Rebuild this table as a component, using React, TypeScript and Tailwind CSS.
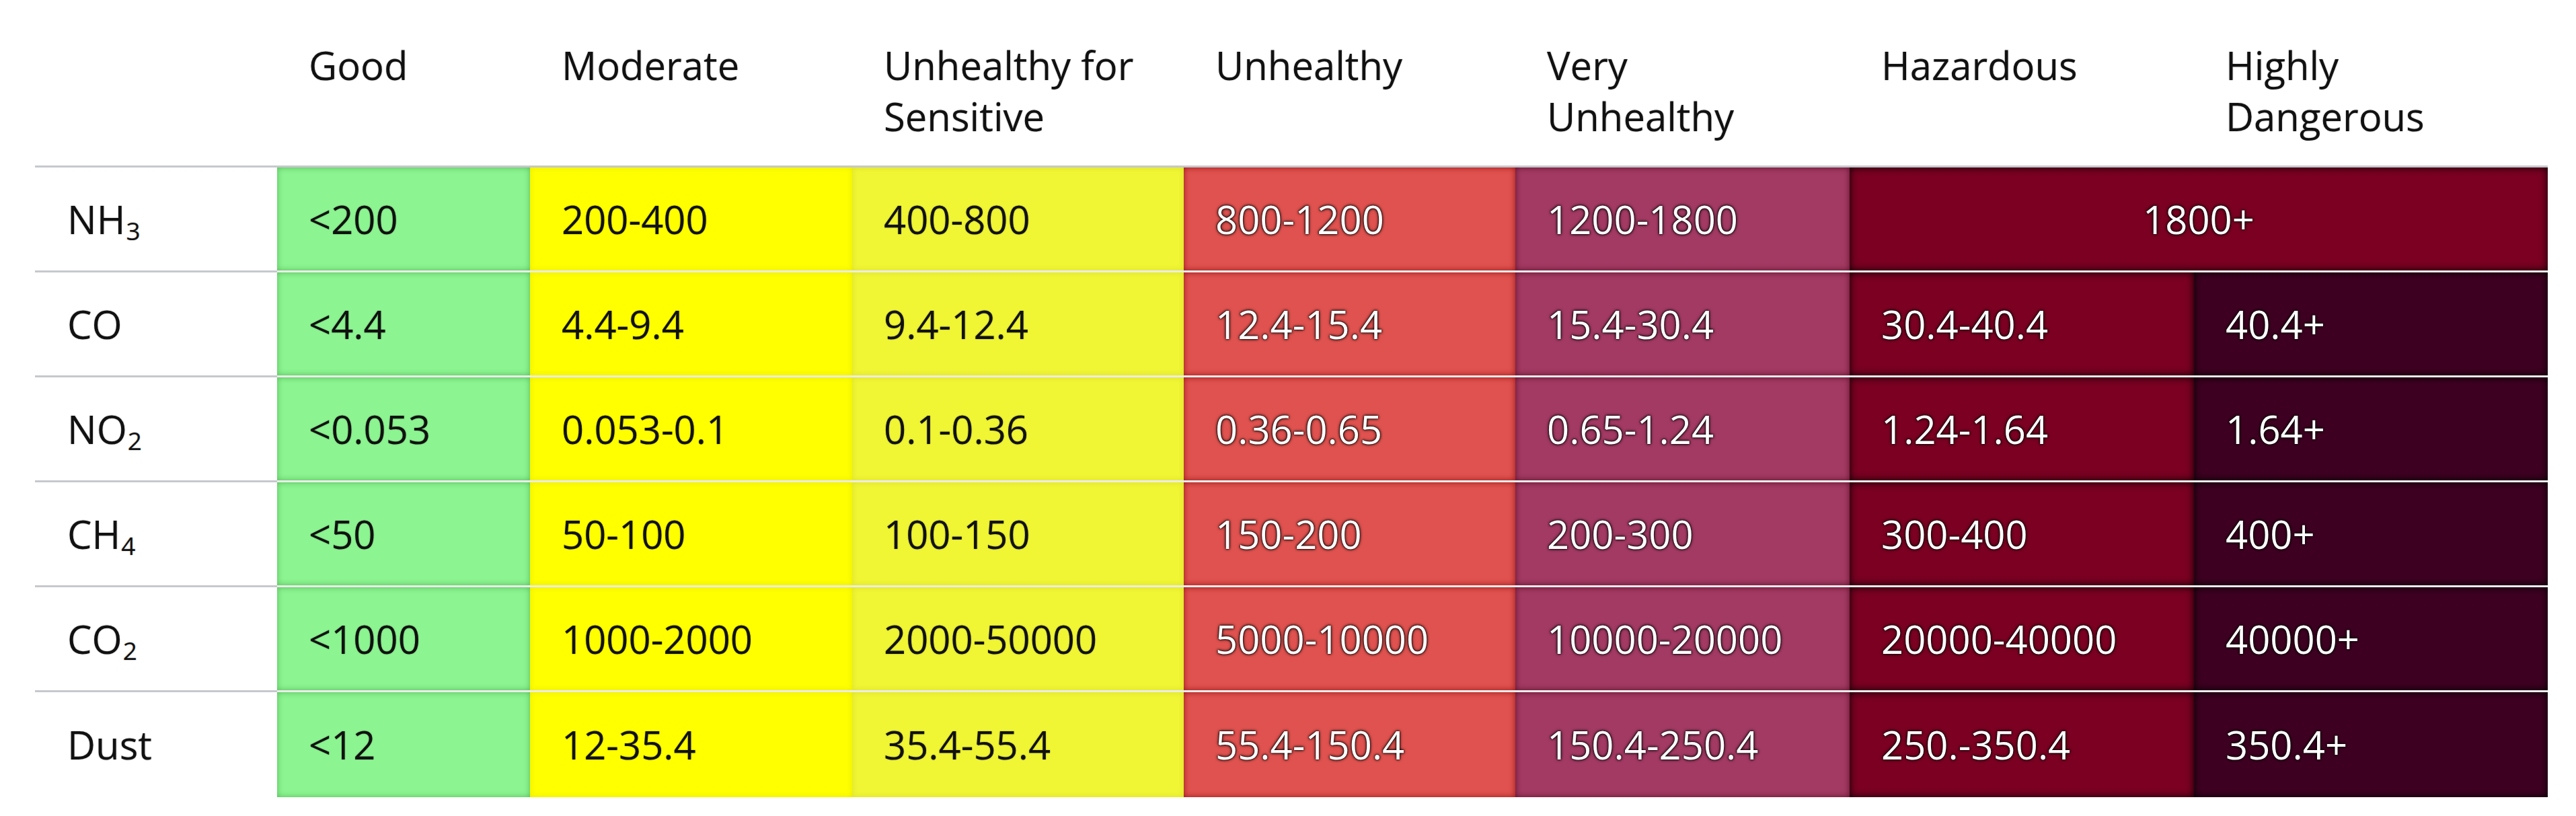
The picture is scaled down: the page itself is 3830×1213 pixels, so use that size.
import React from "react";

type Level = {
  name: string[];
  bg: string;
  light: boolean;
};

const levels: Level[] = [
  { name: ["Good"], bg: "bg-[#8cf591] shadow-[inset_0_0_10px_rgba(20,110,20,0.45)]", light: false },
  { name: ["Moderate"], bg: "bg-[#ffff00] shadow-[inset_0_0_8px_rgba(140,140,0,0.2)]", light: false },
  { name: ["Unhealthy for", "Sensitive"], bg: "bg-[#f0f634] shadow-[inset_0_0_8px_rgba(140,140,0,0.2)]", light: false },
  { name: ["Unhealthy"], bg: "bg-[#e0524f] shadow-[inset_0_0_10px_rgba(130,0,0,0.75)]", light: true },
  { name: ["Very", "Unhealthy"], bg: "bg-[#a33a63] shadow-[inset_0_0_10px_rgba(70,0,20,0.75)]", light: true },
  { name: ["Hazardous"], bg: "bg-[#7b0022] shadow-[inset_0_0_12px_rgba(0,0,0,0.95)]", light: true },
  { name: ["Highly", "Dangerous"], bg: "bg-[#3e0021] shadow-[inset_0_0_12px_rgba(0,0,0,1)]", light: true },
];

type Row = {
  label: React.ReactNode;
  values: string[];
};

const Sub = ({ children }: { children: React.ReactNode }) => (
  <sub className="text-[37px] ml-[1px]">{children}</sub>
);

const rows: Row[] = [
  { label: <>NH<Sub>3</Sub></>, values: ["<200", "200-400", "400-800", "800-1200", "1200-1800", "1800+"] },
  { label: "CO", values: ["<4.4", "4.4-9.4", "9.4-12.4", "12.4-15.4", "15.4-30.4", "30.4-40.4", "40.4+"] },
  { label: <>NO<Sub>2</Sub></>, values: ["<0.053", "0.053-0.1", "0.1-0.36", "0.36-0.65", "0.65-1.24", "1.24-1.64", "1.64+"] },
  { label: <>CH<Sub>4</Sub></>, values: ["<50", "50-100", "100-150", "150-200", "200-300", "300-400", "400+"] },
  { label: <>CO<Sub>2</Sub></>, values: ["<1000", "1000-2000", "2000-50000", "5000-10000", "10000-20000", "20000-40000", "40000+"] },
  { label: "Dust", values: ["<12", "12-35.4", "35.4-55.4", "55.4-150.4", "150.4-250.4", "250.-350.4", "350.4+"] },
];

const darkText = "text-[#111] [text-shadow:0_0_2px_rgba(0,0,0,0.35)]";
const lightText = "text-white [text-shadow:0_0_5px_#000,0_0_3px_#000,0_0_1px_#000]";

export default function App() {
  return (
    <div className="w-[3830px] h-[1213px] bg-white font-['Open_Sans',sans-serif] text-[58px] leading-[76px]">
      <div className="ml-[52px] grid grid-cols-[360px_376px_479px_493px_493px_497px_512px_526px]">
        {/* header */}
        <div className="h-[249px] border-b-[3px] border-[#c6c8cc]" />
        {levels.map((l) => (
          <div key={l.name.join(" ")} className={`h-[249px] border-b-[3px] border-[#c6c8cc] pt-[59px] pl-[47px] ${darkText}`}>
            {l.name.map((line) => (
              <div key={line}>{line}</div>
            ))}
          </div>
        ))}

        {/* body */}
        {rows.map((row, ri) => {
          const last = ri === rows.length - 1;
          const spanned = row.values.length === 6;
          return (
            <React.Fragment key={ri}>
              <div
                className={`h-[156px] flex items-center pl-[48px] ${darkText} ${
                  last ? "" : "border-b-[3px] border-[#c6c8cc]"
                }`}
              >
                <span>{row.label}</span>
              </div>
              {row.values.map((v, ci) => {
                const lvl = levels[ci];
                const isSpan = spanned && ci === 5;
                return (
                  <div
                    key={ci}
                    className={`h-[156px] flex items-center ${lvl.bg} ${lvl.light ? lightText : darkText} ${
                      last ? "" : "border-b-[3px] border-[#ececec]"
                    } ${isSpan ? "col-span-2 justify-center" : "pl-[47px]"}`}
                  >
                    {v}
                  </div>
                );
              })}
            </React.Fragment>
          );
        })}
      </div>
    </div>
  );
}
